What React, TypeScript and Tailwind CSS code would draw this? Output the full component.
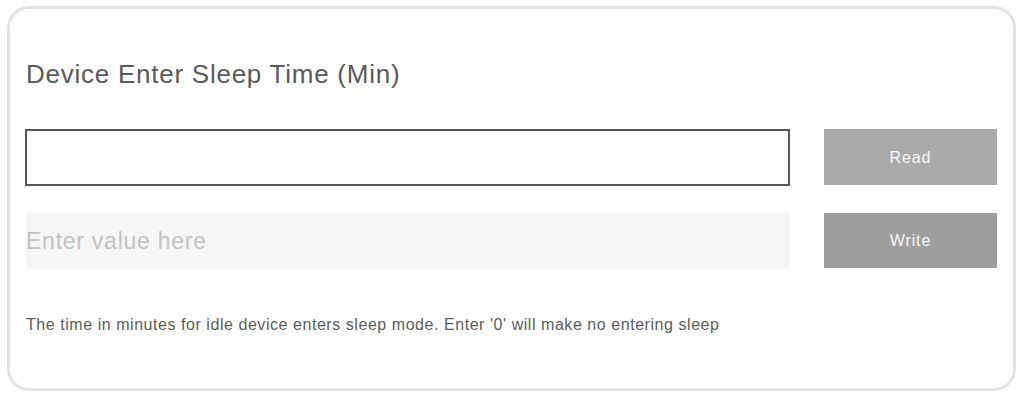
export default function App() {
  return (
    <div className="w-[1024px] h-[403px] bg-white pl-[7px] pt-[6px] font-['Liberation_Sans',Arial,sans-serif]">
      <div className="w-[1009px] h-[385px] border-[3px] border-[#e3e3e3] rounded-[22px] pl-[15px] pr-[16px] pt-[50px]">
        <h1 className="text-[26px] leading-[30px] tracking-[0.75px] text-[#5a5a5a] pl-px">Device Enter Sleep Time (Min)</h1>
        <div className="mt-[40px] grid grid-cols-[765px_173px] gap-x-[34px] gap-y-[27px]">
          <input className="h-[57px] border-2 border-[#555] bg-white outline-none px-2" />
          <button className="h-[56px] pt-[2px] bg-[#aaaaaa] text-[16px] tracking-[0.9px] text-[#f7f7f7]">Read</button>
          <input
            placeholder="Enter value here"
            className="h-[56px] ml-px bg-[#f6f6f6] text-[23px] tracking-[0.75px] px-0 outline-none placeholder:text-[#c2c2c2]"
          />
          <button className="h-[55px] bg-[#9e9e9e] text-[16px] tracking-[0.9px] text-[#f7f7f7]">Write</button>
        </div>
        <p className="mt-[46px] pl-px text-[16px] leading-[19px] tracking-[0.55px] text-[#5c5c5c]">
          The time in minutes for idle device enters sleep mode. Enter '0' will make no entering sleep
        </p>
      </div>
    </div>
  );
}
